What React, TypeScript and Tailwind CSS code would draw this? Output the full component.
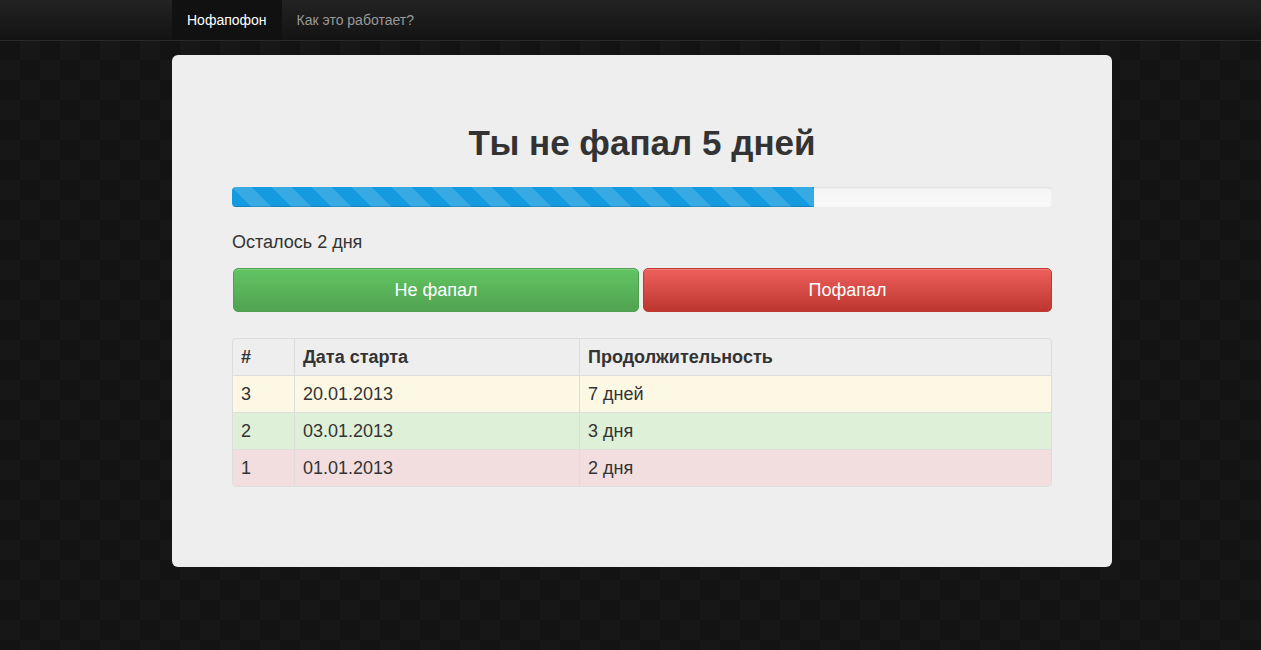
const rows = [
  { n: "3", date: "20.01.2013", len: "7 дней", bg: "bg-[#fcf8e3]" },
  { n: "2", date: "03.01.2013", len: "3 дня", bg: "bg-[#dff0d8]" },
  { n: "1", date: "01.01.2013", len: "2 дня", bg: "bg-[#f2dede]" },
];

export default function App() {
  return (
    <div
      className="min-h-[650px] font-['Liberation_Sans',Arial,sans-serif] text-[#333] bg-[#131313]"
      style={{
        backgroundImage:
          "linear-gradient(45deg, #171717 25%, transparent 25%, transparent 75%, #171717 75%), linear-gradient(45deg, #171717 25%, transparent 25%, transparent 75%, #171717 75%)",
        backgroundSize: "40px 40px",
        backgroundPosition: "0 0, 20px 20px",
      }}
    >
      <div className="h-[41px] bg-gradient-to-b from-[#232323] to-[#131313] border-b border-[#2a2a2a]">
        <div className="w-[940px] ml-[172px] flex h-[40px] text-[14px]">
          <a className="px-[15px] flex items-center bg-[#111] text-white">Нофапофон</a>
          <a className="px-[15px] flex items-center text-[#999]">Как это работает?</a>
        </div>
      </div>

      <div className="w-[940px] ml-[172px] mt-[14px] bg-[#eeeeee] rounded-[6px] px-[60px] pt-[60px] pb-[80px]">
        <h1 className="mt-[8px] mb-[24px] text-center text-[35px] leading-[40px] font-bold">
          Ты не фапал 5 дней
        </h1>

        <div className="h-[20px] rounded-[4px] bg-gradient-to-b from-[#f5f5f5] to-[#f9f9f9] shadow-[inset_0_1px_2px_rgba(0,0,0,0.1)] overflow-hidden">
          <div
            className="h-full bg-[#149bdf] shadow-[inset_0_-1px_0_rgba(0,0,0,0.15)]"
            style={{
              width: "71%",
              backgroundImage:
                "linear-gradient(45deg, rgba(255,255,255,0.15) 25%, transparent 25%, transparent 50%, rgba(255,255,255,0.15) 50%, rgba(255,255,255,0.15) 75%, transparent 75%, transparent)",
              backgroundSize: "40px 40px",
            }}
          />
        </div>

        <p className="mt-[25px] mb-[16px] text-[18px] leading-[20px]">Осталось 2 дня</p>

        <div className="flex gap-[4px] pl-[1px]">
          <button className="w-[406px] h-[44px] rounded-[5px] border border-[#4f9f4f] bg-gradient-to-b from-[#62c462] to-[#51a351] text-white text-[18px] shadow-[inset_0_1px_0_rgba(255,255,255,0.2)]">
            Не фапал
          </button>
          <button className="flex-1 h-[44px] rounded-[5px] border border-[#c0392f] bg-gradient-to-b from-[#ee5f5b] to-[#bd362f] text-white text-[18px] shadow-[inset_0_1px_0_rgba(255,255,255,0.2)]">
            Пофапал
          </button>
        </div>

        <div className="mt-[26px] border border-[#dddddd] rounded-[4px] overflow-hidden text-[18px] leading-[20px]">
          <div className="grid grid-cols-[61px_285px_1fr] font-bold">
            <div className="px-[8px] py-[8px]">#</div>
            <div className="px-[8px] py-[8px] border-l border-[#dddddd]">Дата старта</div>
            <div className="px-[8px] py-[8px] border-l border-[#dddddd]">Продолжительность</div>
          </div>
          {rows.map((r) => (
            <div key={r.n} className={`grid grid-cols-[61px_285px_1fr] border-t border-[#dddddd] ${r.bg}`}>
              <div className="px-[8px] py-[8px]">{r.n}</div>
              <div className="px-[8px] py-[8px] border-l border-[#dddddd]">{r.date}</div>
              <div className="px-[8px] py-[8px] border-l border-[#dddddd]">{r.len}</div>
            </div>
          ))}
        </div>
      </div>
    </div>
  );
}
